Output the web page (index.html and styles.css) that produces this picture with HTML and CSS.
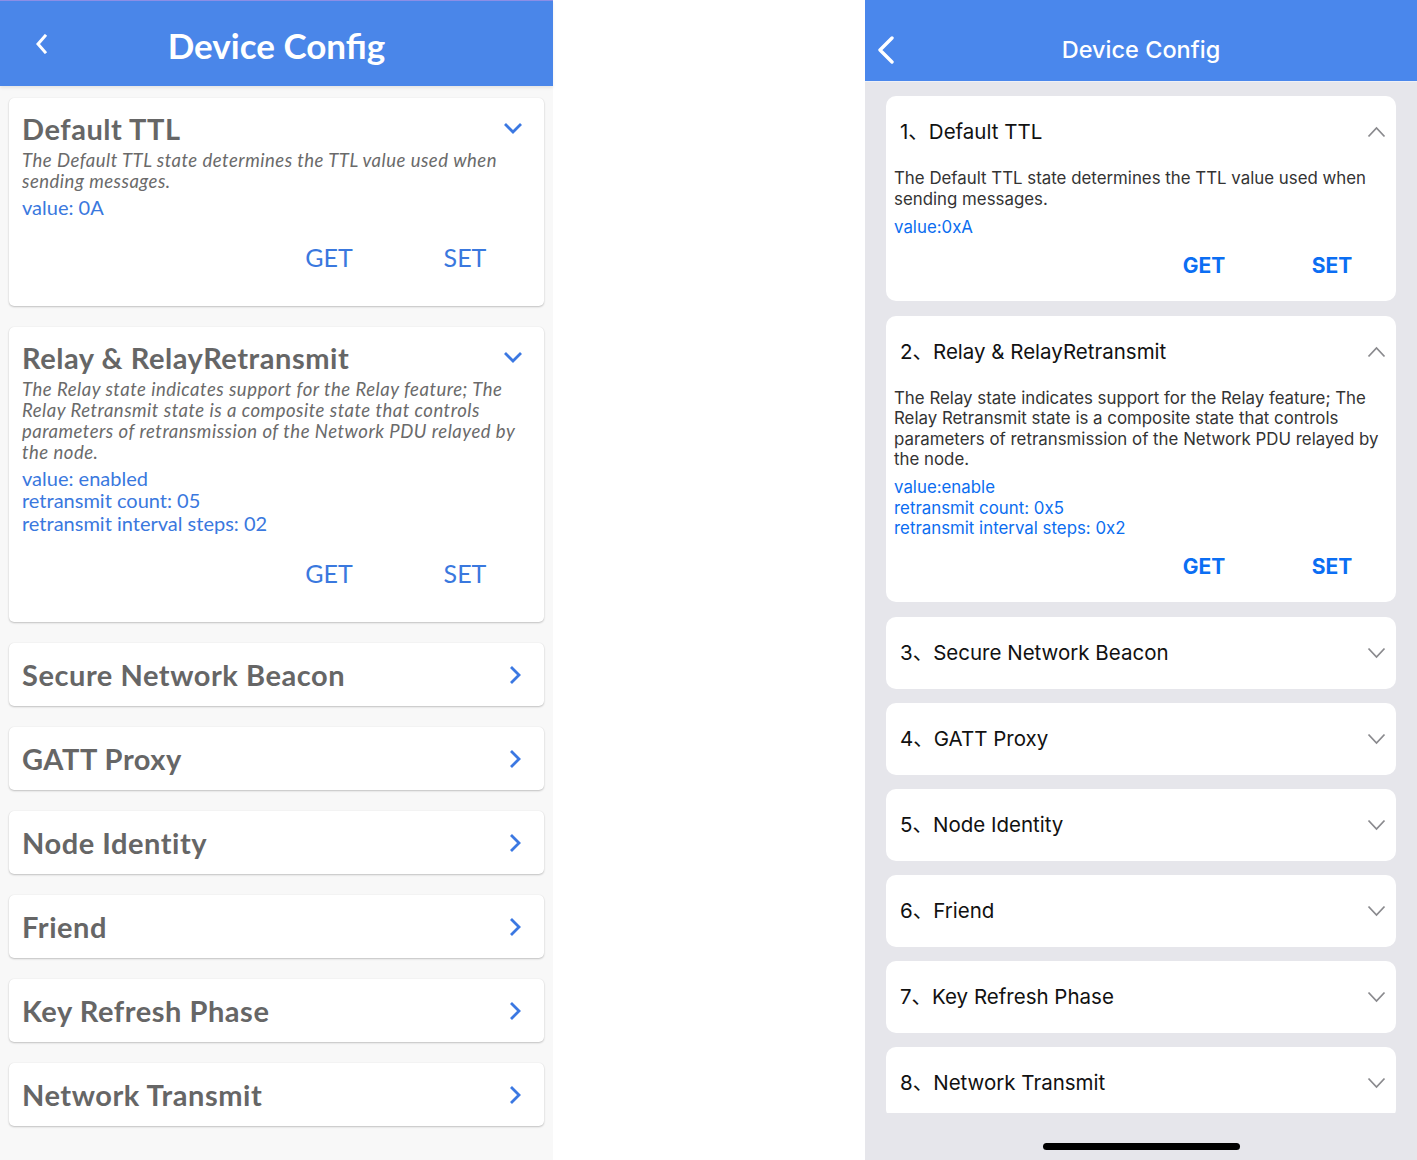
FILE: index.html
```html
<!DOCTYPE html>
<html lang="en">
<head>
<meta charset="utf-8">
<title>Device Config</title>
<link rel="stylesheet" href="styles.css">
</head>
<body>
<div class="stage">
  <section class="droid">
    <header class="droid-bar">
      <span class="droid-back">
        <svg width="14" height="20" viewBox="0 0 14 20"><path d="M10 2 L3 10 L10 18" fill="none" stroke="#fff" stroke-width="3" stroke-linecap="square" stroke-linejoin="miter"/></svg>
      </span>
      <h1 class="droid-title">Device Config</h1>
      <span></span>
    </header>
    <div class="droid-list">
      <div class="d-card">
        <div class="d-head">
          <h2 class="d-title">Default TTL</h2>
          <svg class="d-chev-down" width="20" height="12" viewBox="0 0 20 12"><path d="M2 2 L10 10 L18 2" fill="none" stroke="#3b78e2" stroke-width="2.8"/></svg>
        </div>
        <p class="d-desc">The Default TTL state determines the TTL value used when sending messages.</p>
        <div class="d-values">
          <div>value: 0A</div>
        </div>
        <div class="d-actions">
          <span class="d-btn">GET</span>
          <span class="d-btn">SET</span>
        </div>
      </div>
      <div class="d-card">
        <div class="d-head">
          <h2 class="d-title">Relay &amp; RelayRetransmit</h2>
          <svg class="d-chev-down" width="20" height="12" viewBox="0 0 20 12"><path d="M2 2 L10 10 L18 2" fill="none" stroke="#3b78e2" stroke-width="2.8"/></svg>
        </div>
        <p class="d-desc">The Relay state indicates support for the Relay feature; The Relay Retransmit state is a composite state that controls parameters of retransmission of the Network PDU relayed by the node.</p>
        <div class="d-values">
          <div>value: enabled</div>
          <div>retransmit count: 05</div>
          <div>retransmit interval steps: 02</div>
        </div>
        <div class="d-actions">
          <span class="d-btn">GET</span>
          <span class="d-btn">SET</span>
        </div>
      </div>
      <div class="d-row"><span class="d-title">Secure Network Beacon</span><svg class="d-chev-right" width="12" height="20" viewBox="0 0 12 20"><path d="M2 2 L10 10 L2 18" fill="none" stroke="#3b78e2" stroke-width="2.8"/></svg></div>
      <div class="d-row"><span class="d-title">GATT Proxy</span><svg class="d-chev-right" width="12" height="20" viewBox="0 0 12 20"><path d="M2 2 L10 10 L2 18" fill="none" stroke="#3b78e2" stroke-width="2.8"/></svg></div>
      <div class="d-row"><span class="d-title">Node Identity</span><svg class="d-chev-right" width="12" height="20" viewBox="0 0 12 20"><path d="M2 2 L10 10 L2 18" fill="none" stroke="#3b78e2" stroke-width="2.8"/></svg></div>
      <div class="d-row"><span class="d-title">Friend</span><svg class="d-chev-right" width="12" height="20" viewBox="0 0 12 20"><path d="M2 2 L10 10 L2 18" fill="none" stroke="#3b78e2" stroke-width="2.8"/></svg></div>
      <div class="d-row"><span class="d-title">Key Refresh Phase</span><svg class="d-chev-right" width="12" height="20" viewBox="0 0 12 20"><path d="M2 2 L10 10 L2 18" fill="none" stroke="#3b78e2" stroke-width="2.8"/></svg></div>
      <div class="d-row"><span class="d-title">Network Transmit</span><svg class="d-chev-right" width="12" height="20" viewBox="0 0 12 20"><path d="M2 2 L10 10 L2 18" fill="none" stroke="#3b78e2" stroke-width="2.8"/></svg></div>
    </div>
  </section>

  <div class="spacer"></div>

  <section class="ios">
    <header class="ios-bar">
      <span class="ios-back">
        <svg width="18" height="28" viewBox="0 0 18 28"><path d="M15 2 L3 14 L15 26" fill="none" stroke="#fff" stroke-width="3.4" stroke-linecap="round" stroke-linejoin="round"/></svg>
      </span>
      <h1 class="ios-title">Device Config</h1>
      <span></span>
    </header>
    <div class="ios-viewport">
      <div class="ios-list">
        <div class="i-card">
          <div class="i-head">
            <h2 class="i-title">1、Default TTL</h2>
            <svg class="i-chev" width="19" height="12" viewBox="0 0 19 12"><path d="M1.5 10.5 L9.5 2 L17.5 10.5" fill="none" stroke="#8a8a8e" stroke-width="1.8"/></svg>
          </div>
          <p class="i-desc">The Default TTL state determines the TTL value used when sending messages.</p>
          <div class="i-values">
            <div>value:0xA</div>
          </div>
          <div class="i-actions">
            <span class="i-btn">GET</span>
            <span class="i-btn">SET</span>
          </div>
        </div>
        <div class="i-card">
          <div class="i-head">
            <h2 class="i-title">2、Relay &amp; RelayRetransmit</h2>
            <svg class="i-chev" width="19" height="12" viewBox="0 0 19 12"><path d="M1.5 10.5 L9.5 2 L17.5 10.5" fill="none" stroke="#8a8a8e" stroke-width="1.8"/></svg>
          </div>
          <p class="i-desc">The Relay state indicates support for the Relay feature; The Relay Retransmit state is a composite state that controls parameters of retransmission of the Network PDU relayed by the node.</p>
          <div class="i-values">
            <div>value:enable</div>
            <div>retransmit count: 0x5</div>
            <div>retransmit interval steps: 0x2</div>
          </div>
          <div class="i-actions">
            <span class="i-btn">GET</span>
            <span class="i-btn">SET</span>
          </div>
        </div>
        <div class="i-row"><span class="i-title">3、Secure Network Beacon</span><svg class="i-chev" width="19" height="12" viewBox="0 0 19 12"><path d="M1.5 1.5 L9.5 10 L17.5 1.5" fill="none" stroke="#8a8a8e" stroke-width="1.8"/></svg></div>
        <div class="i-row"><span class="i-title">4、GATT Proxy</span><svg class="i-chev" width="19" height="12" viewBox="0 0 19 12"><path d="M1.5 1.5 L9.5 10 L17.5 1.5" fill="none" stroke="#8a8a8e" stroke-width="1.8"/></svg></div>
        <div class="i-row"><span class="i-title">5、Node Identity</span><svg class="i-chev" width="19" height="12" viewBox="0 0 19 12"><path d="M1.5 1.5 L9.5 10 L17.5 1.5" fill="none" stroke="#8a8a8e" stroke-width="1.8"/></svg></div>
        <div class="i-row"><span class="i-title">6、Friend</span><svg class="i-chev" width="19" height="12" viewBox="0 0 19 12"><path d="M1.5 1.5 L9.5 10 L17.5 1.5" fill="none" stroke="#8a8a8e" stroke-width="1.8"/></svg></div>
        <div class="i-row"><span class="i-title">7、Key Refresh Phase</span><svg class="i-chev" width="19" height="12" viewBox="0 0 19 12"><path d="M1.5 1.5 L9.5 10 L17.5 1.5" fill="none" stroke="#8a8a8e" stroke-width="1.8"/></svg></div>
        <div class="i-row"><span class="i-title">8、Network Transmit</span><svg class="i-chev" width="19" height="12" viewBox="0 0 19 12"><path d="M1.5 1.5 L9.5 10 L17.5 1.5" fill="none" stroke="#8a8a8e" stroke-width="1.8"/></svg></div>
      </div>
    </div>
    <div class="ios-home"><span class="home-bar"></span></div>
  </section>
</div>
</body>
</html>
```
FILE: styles.css
```css
* { box-sizing: border-box; }
html, body { margin: 0; padding: 0; background: #fff; }
body { width: 1417px; height: 1160px; overflow: hidden; }
h1, h2, p { margin: 0; font-weight: inherit; font-size: inherit; }

.stage { display: flex; width: 1417px; height: 1160px; }
.spacer { width: 312px; flex: none; background: #fff; }

/* ---------- Android style panel ---------- */
.droid {
  width: 553px; flex: none; height: 1160px;
  background: #f8f8f8;
  font-family: Lato, "Open Sans", sans-serif;
  display: flex; flex-direction: column;
}
.droid-bar {
  height: 86px; flex: none;
  background: #4a86e9;
  border-top: 1px solid #8c8ee6;
  display: grid; grid-template-columns: 1fr auto 1fr; align-items: center;
  box-shadow: 0 2px 3px rgba(0,0,0,0.08);
  position: relative; z-index: 1;
}
.droid-back { padding-left: 35px; display: flex; align-items: center; margin-top: 1px; }
.droid-title {
  color: #fff; font-weight: 700; font-size: 35px; line-height: 42px;
  margin-top: 2px;
}
.droid-list {
  padding: 12px 9px 0 9px;
  display: flex; flex-direction: column; gap: 21px;
}
.d-card {
  background: #fff; border-radius: 5px;
  box-shadow: 0 1px 2px rgba(0,0,0,0.22), 0 0 1px rgba(0,0,0,0.1);
  padding: 14px 13px 34px 13px;
}
.d-head { display: flex; align-items: center; justify-content: space-between; }
.d-title {
  color: #666; font-weight: 700; font-size: 29px; line-height: 34px;
  letter-spacing: 0.55px;
}
.d-chev-down { margin-right: 8px; margin-top: -2px; }
.d-desc {
  margin-top: 3.5px; padding-right: 12px;
  color: #6a6a6a; font-style: italic; font-size: 18.5px; line-height: 21px;
  letter-spacing: 0.5px;
}
.d-values {
  margin-top: 4px;
  color: #3a78de; font-size: 20px; line-height: 22.5px;
}
.d-actions {
  margin-top: 24px;
  display: flex; justify-content: flex-end; gap: 46px;
  padding-right: 21px;
}
.d-btn {
  width: 90px; text-align: center;
  color: #3a78de; font-size: 25px; line-height: 30px;
}
.d-row {
  background: #fff; border-radius: 5px;
  box-shadow: 0 1px 2px rgba(0,0,0,0.22), 0 0 1px rgba(0,0,0,0.1);
  height: 63px; padding: 0 23px 0 13px;
  display: flex; align-items: center; justify-content: space-between;
}

/* ---------- iOS style panel ---------- */
.ios {
  width: 552px; flex: none; height: 1160px;
  background: #e6e6eb;
  font-family: Inter, "Noto Sans CJK SC", sans-serif;
  display: flex; flex-direction: column;
}
.ios-bar {
  height: 82px; flex: none;
  background: #4a87ec;
  border-bottom: 1px solid #eef0f6;
  padding-top: 18px;
  display: grid; grid-template-columns: 1fr auto 1fr; align-items: center;
}
.ios-back { padding-left: 12px; display: flex; align-items: center; }
.ios-title { color: #fff; font-size: 23.5px; font-weight: 500; line-height: 30px; }
.ios-viewport { height: 1031px; overflow: hidden; flex: none; }
.ios-list {
  padding: 14px 21px 0 21px;
  display: flex; flex-direction: column; gap: 14px;
}
.i-card {
  background: #fff; border-radius: 10px;
  padding: 22px 0 22px 8px;
  margin-bottom: 1px;
}
.i-head { display: flex; align-items: center; justify-content: space-between; padding-left: 6px; padding-right: 10px; }
.i-title {
  color: #111; font-size: 20.5px; line-height: 28px; font-weight: 400;
  font-family: Inter, "Noto Sans CJK SC", sans-serif;
}
.i-desc {
  margin-top: 22px; padding-right: 12px;
  color: #333; font-size: 16.85px; line-height: 20.5px;
}
.i-values {
  margin-top: 7.5px;
  color: #0b6df0; font-size: 16.85px; line-height: 20.5px;
}
.i-actions {
  margin-top: 15.5px;
  display: flex; justify-content: flex-end; gap: 48px; padding-right: 24px;
}
.i-btn {
  width: 80px; text-align: center;
  color: #0b6ef3; font-weight: 700; font-size: 21px; line-height: 26px;
}
.i-row {
  background: #fff; border-radius: 10px;
  height: 72px; padding: 0 10px 0 14px;
  display: flex; align-items: center; justify-content: space-between;
}
.ios-home {
  flex: 1; display: flex; justify-content: center; align-items: flex-start;
  padding-top: 30px;
}
.home-bar {
  width: 197px; height: 7px; border-radius: 4px; background: #000;
}
```
